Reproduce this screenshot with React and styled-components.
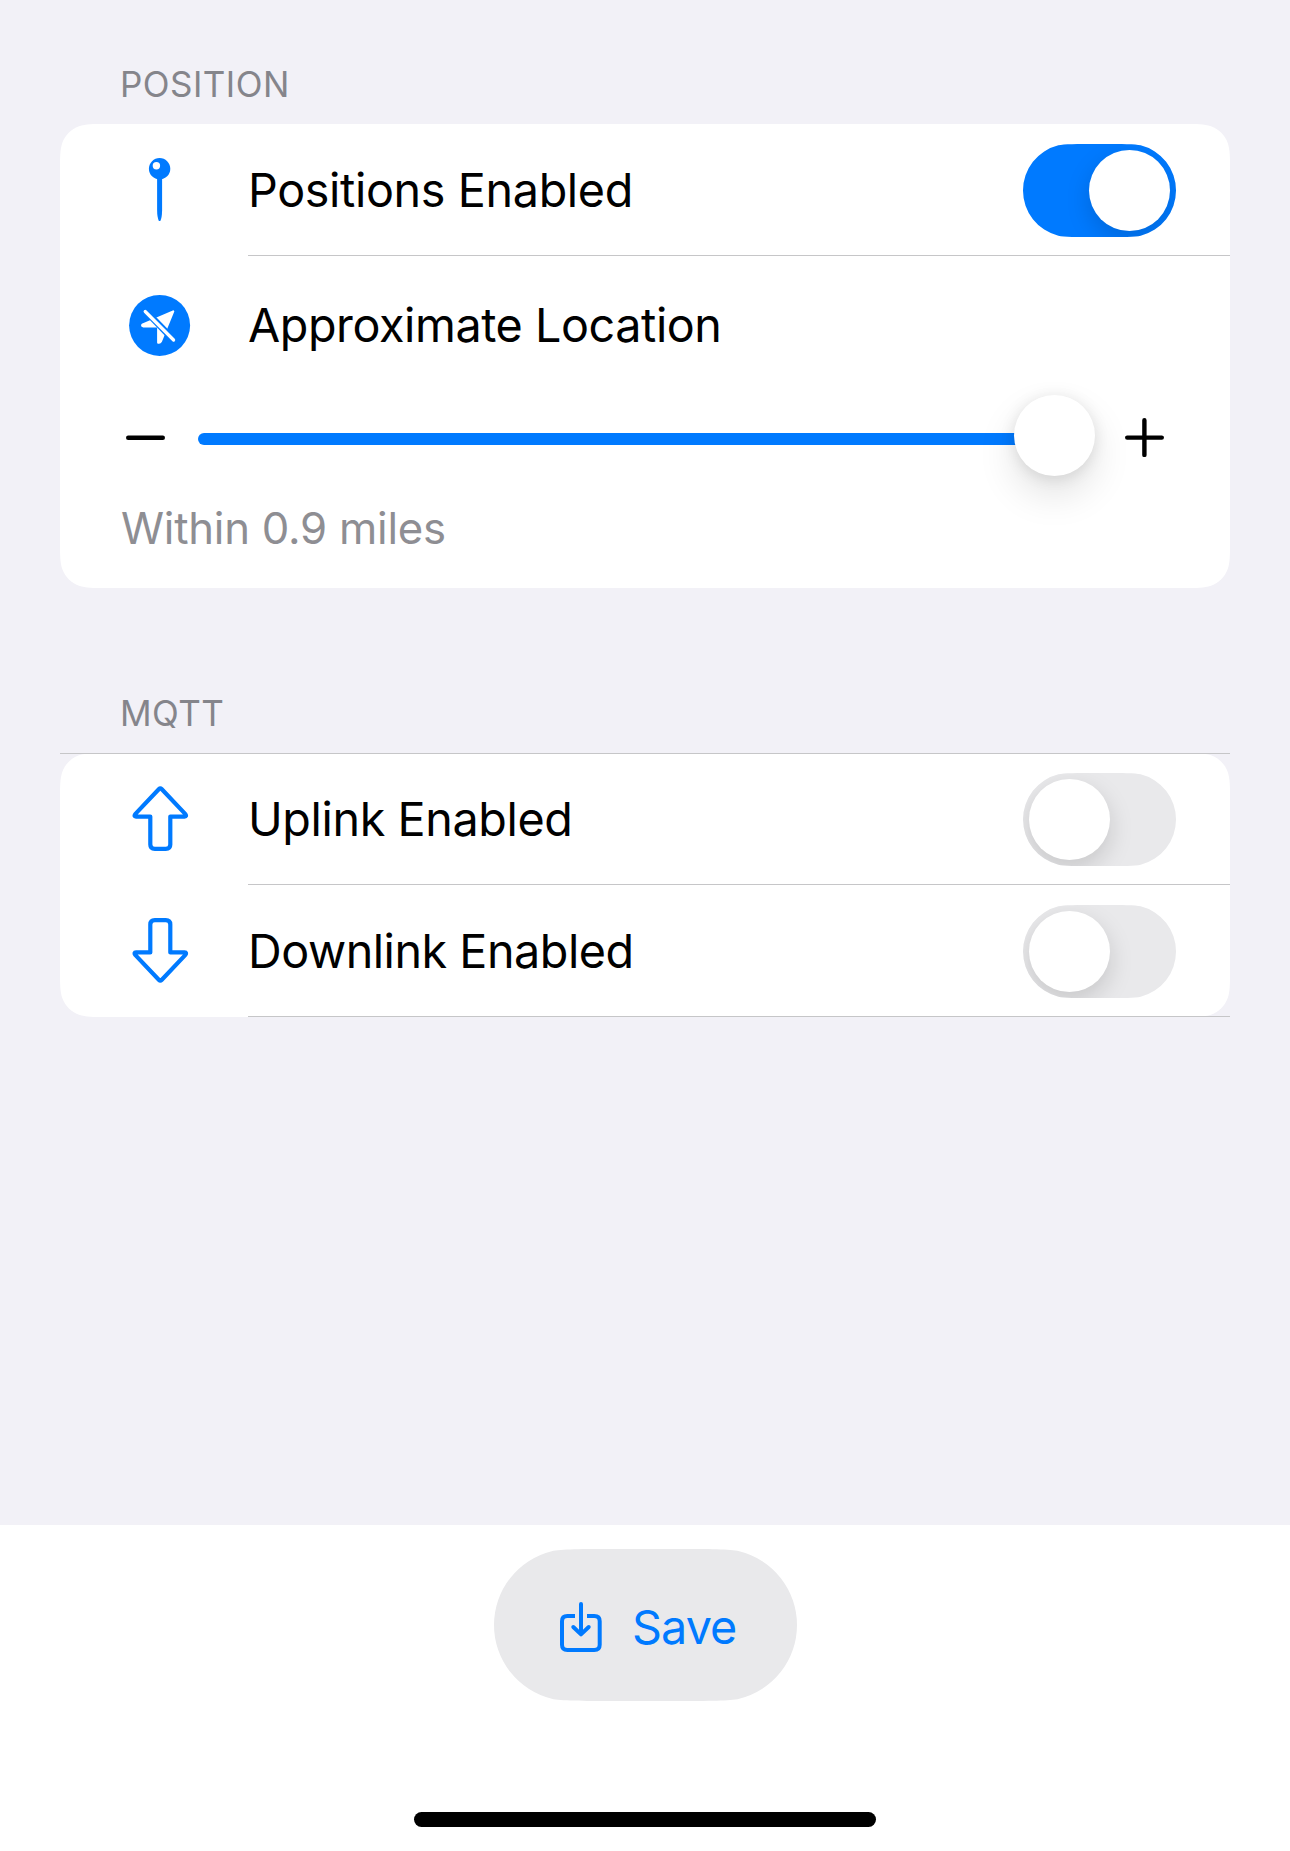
import React, { useState } from 'react';
import styled, { createGlobalStyle } from 'styled-components';

const BLUE = '#007aff';
const FILL = '#e9e9eb';
const LINE = '#c6c6c8';

const GlobalStyle = createGlobalStyle`
  body {
    margin: 0;
    background: #f2f1f7;
    font-family: Inter, "Liberation Sans", sans-serif;
    font-weight: 400;
  }
`;

/* Continuous-curvature corners, as used for grouped cards. */
const roundedPath = (w, h, r) => {
  const a = 1.5287 * r;
  const b = 1.0885 * r;
  const c = 0.8684 * r;
  const d = 0.6315 * r;
  const e = 0.0749 * r;
  const f = 0.3728 * r;
  const g = 0.1691 * r;
  return `path("M${a} 0H${w - a}C${w - b} 0 ${w - c} 0 ${w - d} ${e}C${w - f} ${g} ${w - g} ${f} ${w - e} ${d}C${w} ${c} ${w} ${b} ${w} ${a}V${h - a}C${w} ${h - b} ${w} ${h - c} ${w - e} ${h - d}C${w - g} ${h - f} ${w - f} ${h - g} ${w - d} ${h - e}C${w - c} ${h} ${w - b} ${h} ${w - a} ${h}H${a}C${b} ${h} ${c} ${h} ${d} ${h - e}C${f} ${h - g} ${g} ${h - f} ${e} ${h - d}C0 ${h - c} 0 ${h - b} 0 ${h - a}V${a}C0 ${b} 0 ${c} ${e} ${d}C${g} ${f} ${f} ${g} ${d} ${e}C${c} 0 ${b} 0 ${a} 0Z")`;
};

/* Capsule whose round ends ease into the flat sides. */
const capsulePath = (w, h) => {
  const r = h / 2;
  const a = 1.6 * r;
  const b = 1.15 * r;
  const c = 0.878 * r;
  const d = 0.76 * r;
  const e = 0.0292 * r;
  return `path("M${a} 0H${w - a}C${w - b} 0 ${w - c} 0 ${w - d} ${e}A${r} ${r} 0 0 1 ${w - d} ${h - e}C${w - c} ${h} ${w - b} ${h} ${w - a} ${h}H${a}C${b} ${h} ${c} ${h} ${d} ${h - e}A${r} ${r} 0 0 1 ${d} ${e}C${c} 0 ${b} 0 ${a} 0Z")`;
};

const Screen = styled.div`
  display: flex;
  flex-direction: column;
  width: 1290px;
  height: 1851px;
  overflow: hidden;
`;

const Form = styled.main`
  flex: 1;
  display: flex;
  flex-direction: column;
  gap: 104px;
  padding: 63px 60px 0;
`;

const Section = styled.section`
  display: flex;
  flex-direction: column;
  gap: 19px;
`;

const SectionTitle = styled.h2`
  margin: 0;
  padding-left: 60px;
  font-size: 35px;
  line-height: 42px;
  font-weight: 400;
  letter-spacing: 0.45px;
  color: #85858b;
`;

const Card = styled.div`
  position: relative;
  isolation: isolate;
  display: flex;
  flex-direction: column;
  height: ${(p) => p.$height}px;

  &::before {
    content: '';
    position: absolute;
    inset: 0;
    z-index: -1;
    background: #fff;
    clip-path: ${(p) => roundedPath(1170, p.$height, 30)};
  }
`;

const TopLine = styled.div`
  height: 1px;
  margin-bottom: -1px;
  background: ${LINE};
`;

const Row = styled.div`
  box-sizing: border-box;
  height: ${(p) => p.$height || 132}px;
  display: grid;
  grid-template-columns: 128px 1fr auto;
  align-items: center;
  padding: 0 54px 0 60px;
`;

const Separator = styled.div`
  height: 1px;
  margin: -1px 0 0 188px;
  background: ${LINE};
`;

const RowIcon = styled.svg`
  display: block;
  width: 80px;
  height: 80px;
`;

const RowLabel = styled.span`
  font-size: 46.7px;
  line-height: 56px;
  letter-spacing: ${(p) => p.$tracking}px;
  color: #000;
  white-space: nowrap;
`;

const Track = styled.button`
  align-self: start;
  display: flex;
  justify-content: ${(p) => (p.$on ? 'flex-end' : 'flex-start')};
  width: 153px;
  height: 93px;
  margin: 20px 0 0;
  padding: 6px;
  border: 0;
  background: ${(p) => (p.$on ? BLUE : FILL)};
  clip-path: ${capsulePath(153, 93)};
`;

const Knob = styled.span`
  width: 81px;
  height: 81px;
  border-radius: 50%;
  background: #fff;
  box-shadow: 0 9px 24px rgba(0, 0, 0, 0.15);
`;

const SliderRow = styled.div`
  display: flex;
  align-items: center;
  height: 87px;
  padding: 0 66px;
`;

const StepIcon = styled.svg`
  flex: none;
  width: 39px;
  height: 39px;
  stroke: #000;
  stroke-width: 4.4;
  stroke-linecap: round;
`;

const SliderBody = styled.div`
  flex: 1;
  display: flex;
  align-items: center;
  height: 87px;
  margin: 0 30px 0 33px;
`;

const SliderFill = styled.div`
  flex: 1;
  height: 12px;
  margin: 3px -40px 0 0;
  border-radius: 6px;
  background: ${BLUE};
`;

const SliderThumb = styled.div`
  width: 81px;
  height: 81px;
  margin-bottom: 4px;
  border-radius: 50%;
  background: #fff;
  box-shadow: 0 18px 39px rgba(0, 0, 0, 0.12), 0 2px 15px rgba(0, 0, 0, 0.1);
`;

const Caption = styled.p`
  margin: 21px 0 0;
  padding-left: 61px;
  font-size: 43.7px;
  line-height: 53px;
  letter-spacing: -0.23px;
  color: #8e8e93;
`;

const Footer = styled.footer`
  box-sizing: border-box;
  height: 326px;
  display: flex;
  flex-direction: column;
  align-items: center;
  justify-content: space-between;
  padding: 24px 0;
  background: #fff;
`;

const SaveButton = styled.button`
  box-sizing: border-box;
  display: flex;
  align-items: center;
  gap: 29px;
  width: 303px;
  height: 152px;
  margin-left: 1px;
  padding: 4px 0 0 65px;
  border: 0;
  background: ${FILL};
  clip-path: ${capsulePath(303, 152)};
  color: ${BLUE};
  font-family: inherit;
  font-size: 46.7px;
  line-height: 56px;
  letter-spacing: -0.9px;
`;

const SaveGlyph = styled.svg`
  flex: none;
  width: 44px;
  height: 52px;
  fill: none;
  stroke: currentColor;
  stroke-width: 4;
  stroke-linecap: round;
  stroke-linejoin: round;
`;

const HomeIndicator = styled.div`
  width: 462px;
  height: 15px;
  border-radius: 7.5px;
  background: #000;
`;

const ARROW =
  'M39 10Q40.3 8.7 41.6 10L65.4 35.1Q67.1 37.6 64.6 37.6H50.3V65.5Q50.3 69.9 45.8 69.9H34.8Q30.3 69.9 30.3 65.5V37.6H16Q13.5 37.6 15.2 35.1Z';

const PinIcon = () => (
  <RowIcon viewBox="0 0 80 80">
    <path
      fill={BLUE}
      fillRule="evenodd"
      d="M39.6 8a10.7 10.7 0 1 1 0 21.4a10.7 10.7 0 1 1 0-21.4ZM36.4 12a3.7 3.7 0 1 0 0 7.4a3.7 3.7 0 1 0 0-7.4Z"
    />
    <path fill={BLUE} d="M37.1 28H42.1V60Q42 67.5 40.3 71H38.9Q37.2 67.5 37.1 60Z" />
  </RowIcon>
);

const LocationSlashIcon = () => (
  <RowIcon viewBox="0 0 80 80">
    <circle cx="39.6" cy="40.4" r="30.5" fill={BLUE} />
    <path
      d="M53.2 26.4L41 56.2Q39.9 58.2 38.2 57.6V41.3H23.2Q21.3 40.6 22.8 39.4Z"
      fill="#fff"
      stroke="#fff"
      strokeWidth="2.2"
      strokeLinejoin="round"
    />
    <path d="M24.2 24.5L55.8 57.1" stroke={BLUE} strokeWidth="6.6" />
    <path d="M25.2 26.5L53.6 55" stroke="#fff" strokeWidth="3.2" strokeLinecap="round" />
  </RowIcon>
);

const ArrowIcon = ({ down }) => (
  <RowIcon viewBox="0 0 80 80">
    <path
      d={ARROW}
      transform={down ? 'translate(0 79) scale(1 -1)' : undefined}
      fill="none"
      stroke={BLUE}
      strokeWidth="4.2"
      strokeLinejoin="round"
    />
  </RowIcon>
);

function Toggle({ initial, label }) {
  const [on, setOn] = useState(initial);
  return (
    <Track type="button" role="switch" aria-checked={on} aria-label={label} $on={on} onClick={() => setOn(!on)}>
      <Knob />
    </Track>
  );
}

function ToggleRow({ icon, label, tracking, initial = false }) {
  return (
    <>
      <Row>
        {icon}
        <RowLabel $tracking={tracking}>{label}</RowLabel>
        <Toggle initial={initial} label={label} />
      </Row>
      <Separator />
    </>
  );
}

export default function App() {
  return (
    <Screen>
      <GlobalStyle />
      <Form>
        <Section>
          <SectionTitle>POSITION</SectionTitle>
          <Card $height={464}>
            <ToggleRow icon={<PinIcon />} label="Positions Enabled" tracking={-0.36} initial />
            <Row $height={138}>
              <LocationSlashIcon />
              <RowLabel $tracking={-0.43}>Approximate Location</RowLabel>
            </Row>
            <SliderRow>
              <StepIcon viewBox="0 0 39 39">
                <path d="M2.2 19.8H36.8" />
              </StepIcon>
              <SliderBody>
                <SliderFill />
                <SliderThumb />
              </SliderBody>
              <StepIcon viewBox="0 0 39 39">
                <path d="M2.2 19.6H36.8M19.4 2.3V36.9" />
              </StepIcon>
            </SliderRow>
            <Caption>Within 0.9 miles</Caption>
          </Card>
        </Section>
        <Section>
          <SectionTitle>MQTT</SectionTitle>
          <Card $height={264}>
            <TopLine />
            <ToggleRow icon={<ArrowIcon />} label="Uplink Enabled" tracking={-0.38} />
            <ToggleRow icon={<ArrowIcon down />} label="Downlink Enabled" tracking={-0.47} />
          </Card>
        </Section>
      </Form>
      <Footer>
        <SaveButton type="button">
          <SaveGlyph viewBox="0 0 44 52">
            <path d="M16 15H8.4Q3 15 3 20.2V43.8Q3 49 8.4 49H35.3Q40.7 49 40.7 43.8V20.2Q40.7 15 35.3 15H28" strokeLinecap="butt" />
            <path d="M22 2.9V33M14.3 26L22 33.4L29.7 26" />
          </SaveGlyph>
          Save
        </SaveButton>
        <HomeIndicator />
      </Footer>
    </Screen>
  );
}
